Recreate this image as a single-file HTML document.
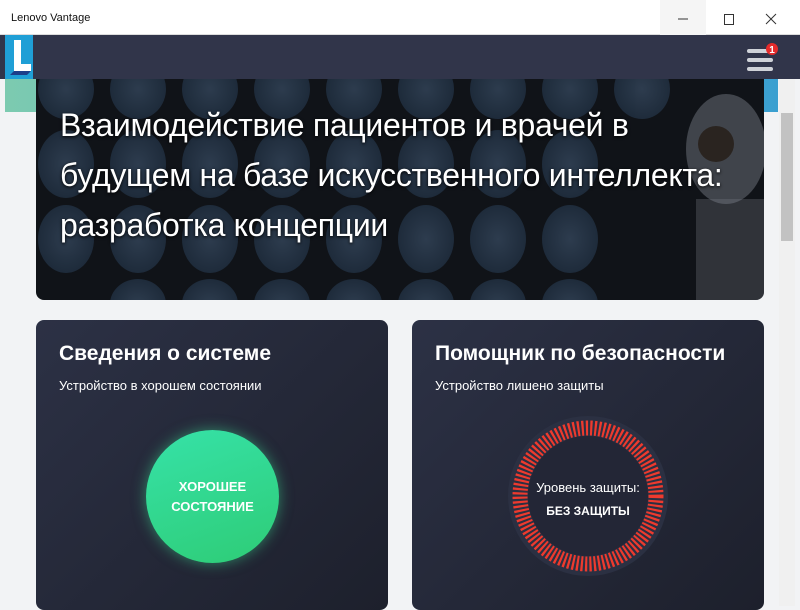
<!DOCTYPE html>
<html><head><meta charset="utf-8"><style>
*{margin:0;padding:0;box-sizing:border-box}
body{width:800px;height:608px;overflow:hidden;background:#f2f3f5;font-family:"Liberation Sans","DejaVu Sans",sans-serif;position:relative}
.tb{position:absolute;left:0;top:0;width:800px;height:35px;background:#fff;border-bottom:1px solid #ddd}
.tb .t{position:absolute;left:11px;top:12px;font-size:11px;color:#111}
.hd{position:absolute;left:0;top:35px;width:800px;height:44px;background:#31354a}
.logo{position:absolute;left:5px;top:35px;width:28px;height:44px;background:#1f9fd6}
.band{position:absolute;left:5px;top:79px;width:773px;height:33px;background:linear-gradient(90deg,#7ccab0,#5fb6c8 60%,#3a9fd0)}
.sb{position:absolute;left:779px;top:79px;width:16px;height:527px;background:#f0f0f0}
.sb .th{position:absolute;left:2px;top:34px;width:12px;height:128px;background:#c2c2c2}
.hero{position:absolute;left:36px;top:79px;width:728px;height:221px;border-radius:0 0 8px 8px;overflow:hidden;background:#101318}
.hero h1{position:absolute;left:24px;top:21px;width:700px;font-weight:normal;font-size:32px;line-height:50px;color:#fff;text-shadow:0 1px 3px #000;letter-spacing:-0.3px}
.card{position:absolute;top:320px;width:352px;height:290px;border-radius:8px;background:linear-gradient(135deg,#2c3145,#1d202c);color:#fff}
.card h2{position:absolute;left:23px;top:22px;font-size:21px;font-weight:bold}
.card p{position:absolute;left:23px;top:58px;font-size:13px}
.green{position:absolute;left:110px;top:110px;width:133px;height:133px;border-radius:50%;background:linear-gradient(160deg,#36e2a8,#2ecc76);box-shadow:0 0 14px rgba(60,230,150,.5);color:#fff;font-weight:bold;font-size:13px;text-align:center;padding-top:47px;line-height:20px}
</style></head><body>
<div class="tb"><div class="t">Lenovo Vantage</div>
<svg style="position:absolute;left:660px;top:0" width="140" height="35"><rect x="0" y="0" width="46" height="35" fill="#f5f5f5"/><line x1="18" y1="19" x2="28" y2="19" stroke="#333"/><rect x="64.5" y="14.5" width="9" height="10" fill="none" stroke="#333"/><path d="M106 14l10 10M116 14l-10 10" stroke="#333"/></svg></div>
<div class="hd"></div>
<div class="logo"><svg width="28" height="44"><path d="M9 5h7v24h10v7H9z" fill="#fff"/><path d="M5 40l4-4h17l-4 4z" fill="#1d3f8a"/></svg></div>
<svg style="position:absolute;left:744px;top:40px" width="40" height="36"><rect x="3" y="9" width="26" height="4" rx="2" fill="#cfd2d8"/><rect x="3" y="18" width="26" height="4" rx="2" fill="#cfd2d8"/><rect x="3" y="27" width="26" height="4" rx="2" fill="#cfd2d8"/><circle cx="28" cy="9" r="6" fill="#e52b2b"/><text x="28" y="13" font-size="10" font-weight="bold" fill="#fff" text-anchor="middle" font-family="Liberation Sans">1</text></svg>
<div class="band"></div>
<div class="sb"><div class="th"></div></div>
<div class="hero">
<svg width="728" height="221" style="position:absolute;left:0;top:0">
<defs><radialGradient id="b" cx="50%" cy="50%" r="50%"><stop offset="0" stop-color="#5a7aa0"/><stop offset="1" stop-color="#34506f"/></radialGradient></defs>
<g fill="url(#b)" opacity=".4">
<ellipse cx="30" cy="10" rx="28" ry="30"/><ellipse cx="102" cy="10" rx="28" ry="30"/><ellipse cx="174" cy="10" rx="28" ry="30"/><ellipse cx="246" cy="10" rx="28" ry="30"/><ellipse cx="318" cy="10" rx="28" ry="30"/><ellipse cx="390" cy="10" rx="28" ry="30"/><ellipse cx="462" cy="10" rx="28" ry="30"/><ellipse cx="534" cy="10" rx="28" ry="30"/><ellipse cx="606" cy="10" rx="28" ry="30"/>
<ellipse cx="30" cy="85" rx="28" ry="34"/><ellipse cx="102" cy="85" rx="28" ry="34"/><ellipse cx="174" cy="85" rx="28" ry="34"/><ellipse cx="246" cy="85" rx="28" ry="34"/><ellipse cx="318" cy="85" rx="28" ry="34"/><ellipse cx="390" cy="85" rx="28" ry="34"/><ellipse cx="462" cy="85" rx="28" ry="34"/><ellipse cx="534" cy="85" rx="28" ry="34"/>
<ellipse cx="30" cy="160" rx="28" ry="34"/><ellipse cx="102" cy="160" rx="28" ry="34"/><ellipse cx="174" cy="160" rx="28" ry="34"/><ellipse cx="246" cy="160" rx="28" ry="34"/><ellipse cx="318" cy="160" rx="28" ry="34"/><ellipse cx="390" cy="160" rx="28" ry="34"/><ellipse cx="462" cy="160" rx="28" ry="34"/><ellipse cx="534" cy="160" rx="28" ry="34"/>
<ellipse cx="102" cy="225" rx="28" ry="25"/><ellipse cx="174" cy="225" rx="28" ry="25"/><ellipse cx="246" cy="225" rx="28" ry="25"/><ellipse cx="318" cy="225" rx="28" ry="25"/><ellipse cx="390" cy="225" rx="28" ry="25"/><ellipse cx="462" cy="225" rx="28" ry="25"/><ellipse cx="534" cy="225" rx="28" ry="25"/>
</g>
<ellipse cx="690" cy="70" rx="40" ry="55" fill="#8a8f98" opacity=".4"/>
<circle cx="680" cy="65" r="18" fill="#2a2420"/>
<rect x="660" y="120" width="68" height="101" fill="#7a7f88" opacity=".3"/>
</svg>
<h1>Взаимодействие пациентов и врачей в будущем на базе искусственного интеллекта: разработка концепции</h1>
</div>
<div class="card" style="left:36px"><h2>Сведения о системе</h2><p>Устройство в хорошем состоянии</p>
<div class="green">ХОРОШЕЕ<br>СОСТОЯНИЕ</div></div>
<div class="card" style="left:412px"><h2>Помощник по безопасности</h2><p>Устройство лишено защиты</p>
<svg style="position:absolute;left:96px;top:96px" width="160" height="160">
<circle cx="80" cy="80" r="80" fill="#2b3042"/>
<circle cx="80" cy="80" r="68" fill="none" stroke="#ee3a2e" stroke-width="15" stroke-dasharray="2.2 2.1"/>
<circle cx="80" cy="80" r="60" fill="#232636"/>
<text x="80" y="76" font-size="13" fill="#fff" text-anchor="middle" font-family="Liberation Sans">Уровень защиты:</text>
<text x="80" y="99" font-size="12" font-weight="bold" fill="#fff" text-anchor="middle" font-family="Liberation Sans">БЕЗ ЗАЩИТЫ</text>
</svg></div>
</body></html>
